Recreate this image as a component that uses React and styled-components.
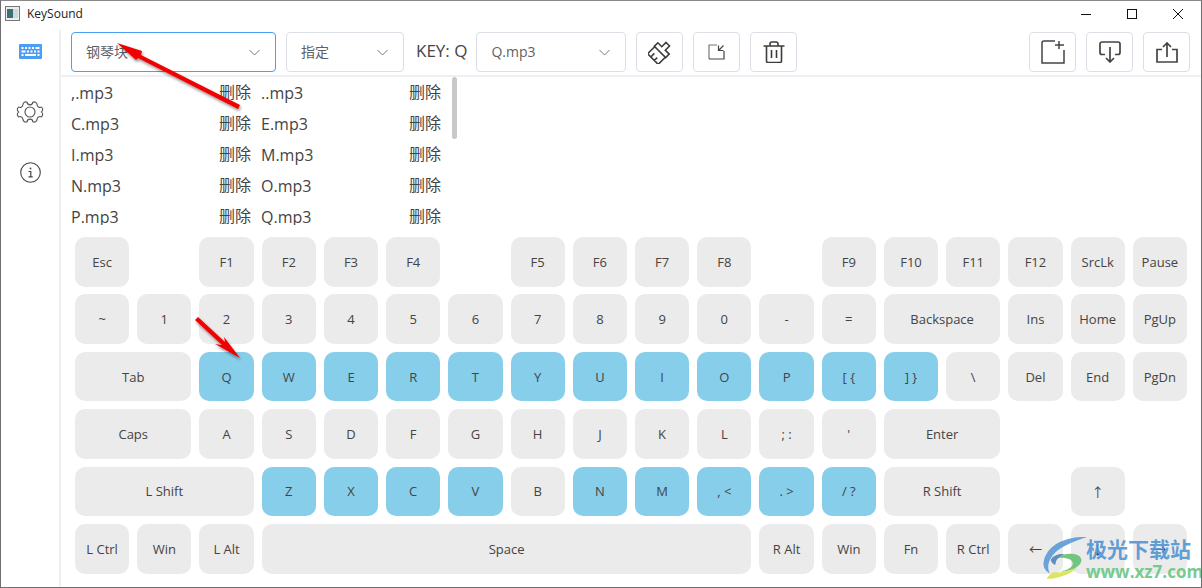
import React from 'react';
import styled, { createGlobalStyle } from 'styled-components';

const FONT = `"Open Sans", "Noto Sans CJK SC", sans-serif`;

const files = [
	[',.mp3', '..mp3'],
	['C.mp3', 'E.mp3'],
	['I.mp3', 'M.mp3'],
	['N.mp3', 'O.mp3'],
	['P.mp3', 'Q.mp3'],
];

const activeKeys = new Set(
	['Q', 'W', 'E', 'R', 'T', 'Y', 'U', 'I', 'O', 'P', '[ {', '] }', 'Z', 'X', 'C', 'V', 'N', 'M', ', <', '. >', '/ ?']
);

// [label, columns it takes, empty columns in front of it]
const keyRows = [
	[['Esc'], ['F1', 1, 1], ['F2'], ['F3'], ['F4'], ['F5', 1, 1], ['F6'], ['F7'], ['F8'], ['F9', 1, 1], ['F10'], ['F11'], ['F12'], ['SrcLk'], ['Pause']],
	[['~'], ['1'], ['2'], ['3'], ['4'], ['5'], ['6'], ['7'], ['8'], ['9'], ['0'], ['-'], ['='], ['Backspace', 2], ['Ins'], ['Home'], ['PgUp']],
	[['Tab', 2], ['Q'], ['W'], ['E'], ['R'], ['T'], ['Y'], ['U'], ['I'], ['O'], ['P'], ['[ {'], ['] }'], ['\\'], ['Del'], ['End'], ['PgDn']],
	[['Caps', 2], ['A'], ['S'], ['D'], ['F'], ['G'], ['H'], ['J'], ['K'], ['L'], ['; :'], ["'"], ['Enter', 2]],
	[['L Shift', 3], ['Z'], ['X'], ['C'], ['V'], ['B'], ['N'], ['M'], [', <'], ['. >'], ['/ ?'], ['R Shift', 2], ['↑', 1, 1]],
	[['L Ctrl'], ['Win'], ['L Alt'], ['Space', 8], ['R Alt'], ['Win'], ['Fn'], ['R Ctrl'], ['←'], ['↓'], ['→']],
];

const App = () => {
	return (
		<Window>
			<GlobalStyle />
			<TitleBar>
				<AppIcon viewBox='0 0 15 15'>
					<rect x='0.5' y='0.5' width='14' height='14' fill='#eee' stroke='#777' />
					<rect x='2' y='3' width='6' height='9' fill='#3d6f78' />
					<rect x='8' y='3' width='5' height='9' fill='#cfd8dc' />
				</AppIcon>
				<AppTitle>KeySound</AppTitle>
				<WindowControls>
					<WinButton>
						<svg width='12' height='12' viewBox='0 0 12 12'>
							<path d='M1 6.500h10' stroke='#111' fill='none' />
						</svg>
					</WinButton>
					<WinButton>
						<svg width='12' height='12' viewBox='0 0 12 12'>
							<rect x='1.500' y='1.500' width='9' height='9' stroke='#111' fill='none' />
						</svg>
					</WinButton>
					<WinButton>
						<svg width='12' height='12' viewBox='0 0 12 12'>
							<path d='M1 1l10 10M11 1L1 11' stroke='#111' fill='none' />
						</svg>
					</WinButton>
				</WindowControls>
			</TitleBar>
			<Body>
				<Sidebar>
					<NavIcon $height={15} $after={39}>
						<svg width='23' height='15' viewBox='0 0 23 15'>
							<rect width='23' height='15' rx='1' fill='#4a9ff5' />
							<path
								d='M2.500 3h2v2h-2zM6 3h2v2H6zM9.500 3h2v2h-2zM13 3h2v2h-2zM16.500 3h4v2h-4zM2.500 6.500h4v2h-4zM8 6.500h2v2H8zM11.500 6.500h2v2h-2zM15 6.500h2v2h-2zM18.500 6.500h2v2h-2zM2.500 10h2v2h-2zM6 10h11v2H6zM18.500 10h2v2h-2z'
								fill='#fff'
							/>
						</svg>
					</NavIcon>
					<NavIcon $height={28} $after={36}>
						<svg width='30' height='30' viewBox='0 0 24 24' fill='none' stroke='#555' strokeWidth='0.9'>
							<path d='M9.670 4.140a2.340 2.340 0 0 0 4.660 0 2.340 2.340 0 0 1 3.320 1.930 2.340 2.340 0 0 0 3.500 2.020 2.340 2.340 0 0 1 0 3.820 2.340 2.340 0 0 0 0 0.180 2.340 2.340 0 0 1 0 3.820 2.340 2.340 0 0 0-3.500 2.020 2.340 2.340 0 0 1-3.320 1.930 2.340 2.340 0 0 0-4.660 0 2.340 2.340 0 0 1-3.320-1.930 2.340 2.340 0 0 0-3.500-2.020 2.340 2.340 0 0 1 0-3.820 2.340 2.340 0 0 0 0-0.180 2.340 2.340 0 0 1 0-3.820 2.340 2.340 0 0 0 3.500-2.020 2.340 2.340 0 0 1 3.320-1.930z' />
							<circle cx='12' cy='12' r='4' />
						</svg>
					</NavIcon>
					<NavIcon $height={21} $after={0}>
						<svg width='21' height='21' viewBox='0 0 21 21' fill='none' stroke='#444'>
							<circle cx='10.500' cy='10.500' r='9.800' strokeWidth='1.100' />
							<path d='M8.500 9.500h2.300v5M8.500 14.800h4.200' strokeWidth='1.200' />
							<circle cx='10.500' cy='6.500' r='0.900' fill='#444' stroke='none' />
						</svg>
					</NavIcon>
				</Sidebar>
				<Main>
					<Toolbar>
						<Select $width={205} $focused>
							<SelectText>钢琴块</SelectText>
							<Chevron />
						</Select>
						<Select $width={118}>
							<SelectText>指定</SelectText>
							<Chevron />
						</Select>
						<KeyLabel>KEY: Q</KeyLabel>
						<Select $width={150}>
							<SelectText>Q.mp3</SelectText>
							<Chevron />
						</Select>
						<IconButton>
							<svg width='24' height='24' viewBox='0 0 24 24' fill='none' stroke='#3c3c3c' strokeWidth='1.600'>
								<g transform='rotate(45 12 12)'>
									<path d='M9.500 1h5v6H20v5H4V7h5.500zM4.500 12v10H19.500V12M9 22v-5M14 22v-4' />
								</g>
							</svg>
						</IconButton>
						<IconButton>
							<svg width='17' height='16' viewBox='0 0 17 16' fill='none' strokeWidth='1.200'>
								<path d='M9 1H1v14' stroke='#777' />
								<path d='M1 15h15V7' stroke='#444' />
								<path d='M10.500 1.500V6.500H15.500M15.500 1.500L11 6' stroke='#444' />
							</svg>
						</IconButton>
						<IconButton>
							<svg width='22' height='22' viewBox='0 0 22 22' fill='none' stroke='#3c3c3c' strokeWidth='1.600'>
								<path d='M0.500 5h21M7 4.500V3a2 2 0 0 1 2-2h4a2 2 0 0 1 2 2v1.500M3.500 5v15a1.500 1.500 0 0 0 1.500 1.500h12a1.500 1.500 0 0 0 1.500-1.500V5M8.500 9v8M13.500 9v8' />
							</svg>
						</IconButton>
						<ToolbarEnd>
							<IconButton>
								<svg width='24' height='24' viewBox='0 0 24 24' fill='none' stroke='#444' strokeWidth='1.500'>
									<path d='M14 1H3a2 2 0 0 0-2 2v20h22V10M18 1v8M14 5h9' />
								</svg>
							</IconButton>
							<IconButton>
								<svg width='22' height='22' viewBox='0 0 22 22' fill='none' stroke='#444' strokeWidth='1.700'>
									<path d='M6 13.500H3a2 2 0 0 1-2-2V3a2 2 0 0 1 2-2h16a2 2 0 0 1 2 2v8.500a2 2 0 0 1-2 2h-3M11 6v15M7 17l4 4 4-4' />
								</svg>
							</IconButton>
							<IconButton>
								<svg width='22' height='21' viewBox='0 0 22 21' fill='none' stroke='#444' strokeWidth='1.700'>
									<path d='M6 7.500H1v12.500h20V7.500h-5M11 15V1M7 5l4-4 4 4' />
								</svg>
							</IconButton>
						</ToolbarEnd>
					</Toolbar>
					<FileList>
						{files.map((row) =>
							row.map((name) => (
								<FileItem key={name}>
									<span>{name}</span>
									<DeleteLink>删除</DeleteLink>
								</FileItem>
							))
						)}
						<ScrollThumb />
					</FileList>
					<Keyboard>
						{keyRows.map((row, rowIndex) => (
							<KeyRow key={rowIndex}>
								{row.map(([label, span = 1, skip = 0]) => (
									<React.Fragment key={label}>
										{skip > 0 && <KeyGap $span={skip} />}
										<Key $span={span} $on={activeKeys.has(label)}>
											{label}
										</Key>
									</React.Fragment>
								))}
							</KeyRow>
						))}
					</Keyboard>
				</Main>
			</Body>
			<ArrowLayer viewBox='0 0 1202 588'>
				<defs>
					<filter id='arrow-shadow' x='-20%' y='-20%' width='140%' height='140%'>
						<feDropShadow dx='1' dy='2' stdDeviation='1.500' floodColor='#000' floodOpacity='0.45' />
					</filter>
				</defs>
				<g fill='#f00000' filter='url(#arrow-shadow)'>
					<path d='M117 43L142 51L141 55L240 105L238 109L138 58L136 60z' />
					<path d='M240 358L224 337L225 342L198 317L195 320L222 345L215 344z' />
				</g>
			</ArrowLayer>
			<Watermark>
				<svg width='44' height='42' viewBox='0 0 46 44'>
					<path d='M46 0C28 -1 6 6 1 24c-2 8 2 12 6 14-3-6-2-14 6-22C21 9 34 4 46 0z' fill='#5b9bd5' opacity='0.9' />
					<path d='M14 22c8-6 24-6 26 1 2 8-14 14-22 13 8-1 14-5 13-9-1-5-10-6-17-5z' fill='#6cc27a' opacity='0.95' />
					<path d='M4 44c10 0 24-4 32-12-6 2-14 6-22 5-4 0-8 2-10 7z' fill='#d9e24f' opacity='0.9' />
					<path d='M8 24c2-4 8-7 14-6-5 2-9 6-9 11-2 0-4-2-5-5z' fill='#4a7fb8' opacity='0.85' />
				</svg>
				<WatermarkText>
					<WatermarkName>极光下载站</WatermarkName>
					<WatermarkUrl>www.xz7.com</WatermarkUrl>
				</WatermarkText>
			</Watermark>
		</Window>
	);
};

const Chevron = () => (
	<ChevronSvg viewBox='0 0 11 7'>
		<path d='M0.500 1l5 5 5-5' fill='none' stroke='#777' />
	</ChevronSvg>
);

const GlobalStyle = createGlobalStyle`
	html, body {
		margin: 0;
		padding: 0;
		background: #fff;
	}
	body {
		font-family: ${FONT};
		color: #444;
	}
`;

const Window = styled.div`
	position: relative;
	box-sizing: border-box;
	width: 1202px;
	height: 588px;
	display: flex;
	flex-direction: column;
	overflow: hidden;
	background: #fff;
	border: 1px solid #6e6e6e;
	border-top-color: #8a8a8a;
`;

const TitleBar = styled.div`
	height: 29px;
	flex: none;
	display: flex;
	align-items: flex-start;
	padding-left: 4px;
`;

const AppIcon = styled.svg`
	width: 15px;
	height: 15px;
	margin-top: 5px;
`;

const AppTitle = styled.span`
	margin-left: 7px;
	font: 12px/25px 'Open Sans', sans-serif;
	color: #222;
`;

const WindowControls = styled.div`
	margin-left: auto;
	display: flex;
`;

const WinButton = styled.div`
	width: 46px;
	height: 25px;
	display: grid;
	place-content: center;
`;

const Body = styled.div`
	flex: 1;
	display: flex;
	min-height: 0;
`;

const Sidebar = styled.nav`
	width: 60px;
	box-sizing: border-box;
	flex: none;
	display: flex;
	flex-direction: column;
	align-items: center;
	border-right: 2px solid #eef0f6;
	padding-top: 14px;
`;

const NavIcon = styled.div`
	height: ${({ $height }) => $height}px;
	margin-bottom: ${({ $after }) => $after}px;
	display: grid;
	place-content: center;
`;

const Main = styled.main`
	flex: 1;
	min-width: 0;
	display: flex;
	flex-direction: column;
`;

const Toolbar = styled.div`
	height: 47px;
	box-sizing: border-box;
	flex: none;
	display: flex;
	align-items: flex-start;
	gap: 10px;
	padding: 2px 11px 0 10px;
	border-bottom: 2px solid #eef0f6;
`;

const ToolbarEnd = styled.div`
	margin-left: auto;
	display: flex;
	gap: 10px;
`;

const Select = styled.div`
	width: ${({ $width }) => $width}px;
	height: 40px;
	box-sizing: border-box;
	display: flex;
	align-items: center;
	justify-content: space-between;
	padding: 0 15px 0 14px;
	border: 1px solid ${({ $focused }) => ($focused ? '#4a9ff5' : '#dcdfe6')};
	border-radius: 4px;
	background: #fff;
	font-size: 14px;
	color: #606266;
`;

const SelectText = styled.span`
	margin-top: -2px;
`;

const ChevronSvg = styled.svg`
	width: 11px;
	height: 7px;
`;

const KeyLabel = styled.span`
	font-size: 17px;
	line-height: 38px;
	margin: 0 -1px 0 2px;
	white-space: nowrap;
	color: #444;
`;

const IconButton = styled.button`
	width: 47px;
	height: 40px;
	padding: 0;
	display: grid;
	place-content: center;
	background: #fff;
	border: 1px solid #dcdfe6;
	border-radius: 4px;
`;

const FileList = styled.div`
	position: relative;
	height: 148px;
	width: 380px;
	padding: 0 10px;
	flex: none;
	overflow: hidden;
	display: grid;
	grid-template-columns: repeat(2, 190px);
	grid-auto-rows: 31px;
`;

const FileItem = styled.div`
	display: flex;
	align-items: center;
	justify-content: space-between;
	padding-right: 10px;
	font-size: 16px;
	color: #444;
`;

const DeleteLink = styled.span`
	margin-top: -3px;
`;

const ScrollThumb = styled.div`
	position: absolute;
	top: 0;
	left: 391px;
	width: 5px;
	height: 62px;
	border-radius: 3px;
	background: #c8c8c8;
`;

const Keyboard = styled.div`
	display: flex;
	flex-direction: column;
	gap: 7.8px;
	padding: 12px 14px 0;
`;

const KeyRow = styled.div`
	display: grid;
	grid-template-columns: repeat(18, 1fr);
	grid-auto-rows: 49.6px;
	gap: 8px;
`;

const KeyGap = styled.div`
	grid-column-end: span ${({ $span }) => $span};
`;

const Key = styled.div`
	grid-column-end: span ${({ $span }) => $span};
	display: grid;
	place-content: center;
	border-radius: 10px;
	background: ${({ $on }) => ($on ? '#87ceeb' : '#ebebeb')};
	font-size: 13px;
	color: #444;
`;

const ArrowLayer = styled.svg`
	position: absolute;
	left: -1px;
	top: -1px;
	width: 1202px;
	height: 588px;
	pointer-events: none;
`;

const Watermark = styled.div`
	position: absolute;
	left: 1042px;
	top: 536px;
	display: flex;
	pointer-events: none;
`;

const WatermarkText = styled.div`
	margin-left: -1px;
	display: flex;
	flex-direction: column;
	margin-top: -2px;
`;

const WatermarkName = styled.span`
	font: bold 21px/27px 'Noto Sans CJK SC', sans-serif;
	color: rgba(78, 146, 210, 0.88);
	white-space: nowrap;
`;

const WatermarkUrl = styled.span`
	font: bold 17px/20px 'Open Sans', sans-serif;
	color: rgba(100, 198, 130, 0.9);
`;

export default App;
